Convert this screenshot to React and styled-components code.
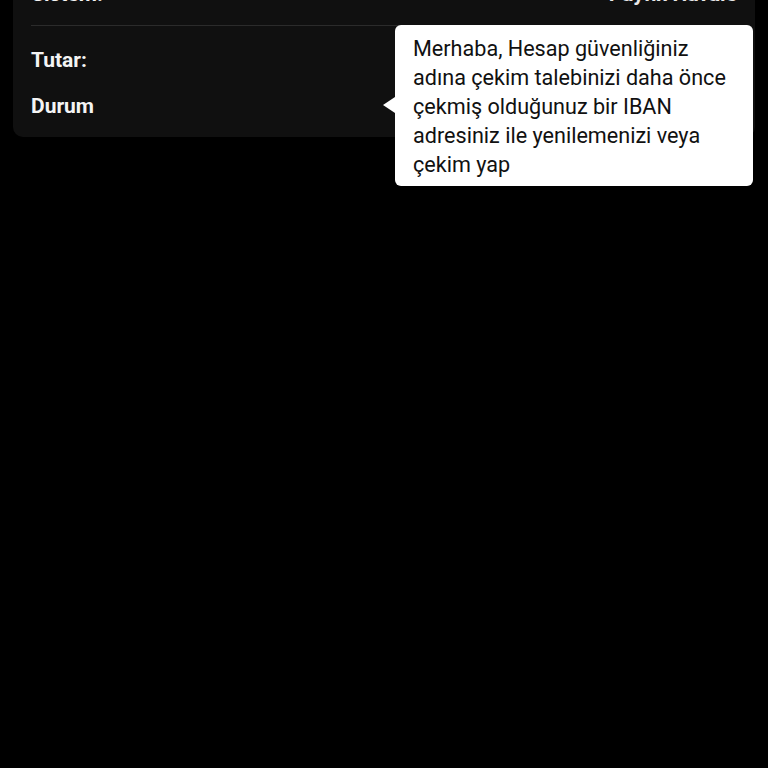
import React from 'react';
import styled, { createGlobalStyle } from 'styled-components';

const GlobalStyle = createGlobalStyle`
  html, body {
    margin: 0;
    padding: 0;
    background: #000;
    font-family: Roboto, "Liberation Sans", sans-serif;
    overflow: hidden;
  }
`;

const Page = styled.div`
  width: 768px;
  height: 768px;
  background: #000;
  overflow: hidden;
`;

const Card = styled.div`
  position: relative;
  margin: -37px 13px 0 13px;
  padding: 0 18px 8px 18px;
  background: #101010;
  border-radius: 10px;
  width: 706px;
`;

const Row = styled.div`
  display: flex;
  justify-content: space-between;
  align-items: center;
  height: ${p => p.h}px;
  margin-top: ${p => p.mt || 0}px;
  border-bottom: ${p => (p.divider ? '1px solid #2b2b2b' : 'none')};
`;

const Label = styled.span`
  color: #f4f4f4;
  font-weight: 700;
  font-size: 21px;
`;

const Value = styled.span`
  color: #e8e8e8;
  font-weight: 700;
  font-size: 21px;
`;

const Tooltip = styled.div`
  position: absolute;
  left: 382px;
  top: 62px;
  width: 358px;
  box-sizing: border-box;
  padding: 9px 16px 7px 18px;
  background: #fff;
  border-radius: 6px;
  color: #111;
  font-size: 21.6px;
  line-height: 29px;

  &::before {
    content: '';
    position: absolute;
    left: -12px;
    top: 72px;
    border-top: 8px solid transparent;
    border-bottom: 8px solid transparent;
    border-right: 12px solid #fff;
  }
`;

export default function App() {
  return (
    <Page>
      <GlobalStyle />
      <Card>
        <Row h={62} divider>
          <Label>Sistem:</Label>
          <Value>Payfix Havale</Value>
        </Row>
        <Row h={46} mt={11}>
          <Label>Tutar:</Label>
        </Row>
        <Row h={46}>
          <Label>Durum</Label>
        </Row>
        <Tooltip>
          Merhaba, Hesap güvenliğiniz adına çekim talebinizi daha önce çekmiş olduğunuz bir IBAN adresiniz ile yenilemenizi veya çekim yap
        </Tooltip>
      </Card>
    </Page>
  );
}
